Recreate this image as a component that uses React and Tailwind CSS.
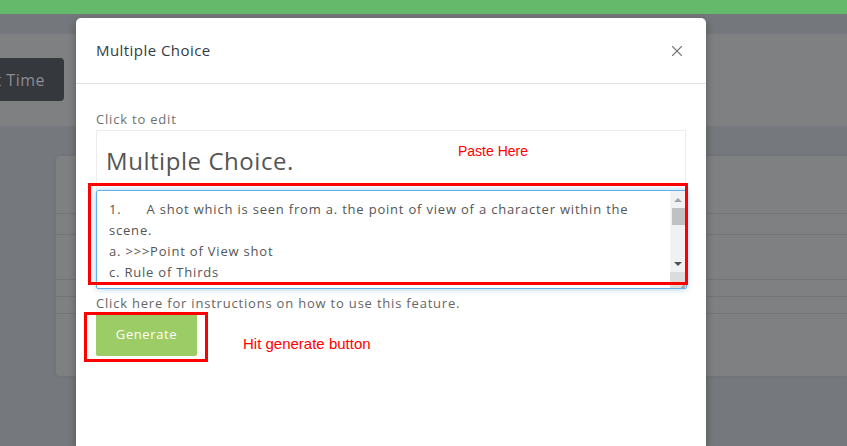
import React from 'react';
import { X } from 'lucide-react';

const questionText = `1.      A shot which is seen from a. the point of view of a character within the scene.
a. >>>Point of View shot
c. Rule of Thirds`;

const BackgroundPage = () => (
  <div className="h-full w-full bg-[#75787c]">
    <div className="h-[14px] bg-[#65b96a]" />
    <div className="h-[20px] bg-[#74777b]" />
    <div className="h-[92px] bg-[#7f8081] pt-[24px]">
      <div className="w-[64px] h-[43px] bg-[#35383d] rounded-r-[4px] flex items-center justify-end pr-[19px] text-[16px] text-[#8b8d90] tracking-[0.5px] whitespace-nowrap">
        t Time
      </div>
    </div>
    <div className="pl-[56px] pt-[30px]">
      <div className="h-[220px] bg-[#7f8081] rounded-l-[4px] shadow-[0_0_4px_rgba(0,0,0,0.08)] pt-[57px]">
        <div className="border-b border-[#737475] h-[0px]" />
        <div className="h-[20px]" />
        <div className="border-b border-[#737475]" />
        <div className="h-[44px]" />
        <div className="border-b border-[#737475]" />
        <div className="h-[16px]" />
        <div className="border-b border-[#737475]" />
        <div className="h-[16px]" />
        <div className="border-b border-[#737475]" />
      </div>
    </div>
  </div>
);

const Scrollbar = () => (
  <div className="w-[16px] h-full bg-[#f1f1f1] flex flex-col items-center">
    <div className="h-[17px] flex items-center justify-center">
      <div className="w-0 h-0 border-l-[4px] border-r-[4px] border-b-[4px] border-l-transparent border-r-transparent border-b-[#a3a3a3]" />
    </div>
    <div className="w-[13px] h-[17px] bg-[#c1c1c1]" />
    <div className="flex-1" />
    <div className="h-[17px] flex items-center justify-center">
      <div className="w-0 h-0 border-l-[4px] border-r-[4px] border-t-[4px] border-l-transparent border-r-transparent border-t-[#505050]" />
    </div>
    <div className="w-[16px] h-[16px] bg-[#dcdcdc] relative overflow-hidden">
      <div className="absolute right-[1px] bottom-[3px] w-[8px] border-t border-[#8a8a8a] -rotate-45 origin-right" />
      <div className="absolute right-[1px] bottom-[1px] w-[4px] border-t border-[#8a8a8a] -rotate-45 origin-right" />
    </div>
  </div>
);

const App = () => {
  return (
    <div className="relative w-[847px] h-[446px] overflow-hidden font-['Open_Sans',sans-serif]">
      <BackgroundPage />

      <div className="absolute left-[76px] top-[18px] bottom-0 w-[630px] bg-white rounded-t-[5px] shadow-[0_3px_9px_rgba(0,0,0,0.3)]">
        <div className="h-[66px] border-b border-[#e1e1e1] flex items-center justify-between px-[20px]">
          <h4 className="text-[15px] text-[#333c45] tracking-[0.45px]">Multiple Choice</h4>
          <X className="w-[18px] h-[18px] text-[#777]" strokeWidth={1.5} />
        </div>

        <div className="px-[20px] pt-[26px]">
          <div className="text-[13px] leading-[18px] text-[#707070] tracking-[0.8px]">Click to edit</div>
          <div className="mt-[2px] h-[60px] border border-[#ededed] border-b-0 px-[9px] flex items-center">
            <span className="text-[24px] text-[#555] tracking-[0.55px]">Multiple Choice.</span>
          </div>
          <div className="flex w-[591px] h-[99px] border border-[#66afe9] rounded-[2px] shadow-[0_0_6px_rgba(102,175,233,0.6)]">
            <div className="flex-1 overflow-hidden pl-[12px] pr-[6px] pt-[8px] text-[13px] leading-[21px] text-[#555] tracking-[0.8px] whitespace-pre-wrap">
              {questionText}
            </div>
            <Scrollbar />
          </div>
          <div className="mt-[5px] text-[13px] leading-[18px] text-[#666] tracking-[0.8px]">
            Click here for instructions on how to use this feature.
          </div>
          <button className="mt-[2px] w-[101px] h-[42px] bg-[#9ccc65] rounded-[2px] text-white text-[13px] tracking-[0.6px]">
            Generate
          </button>
        </div>

        <div className="absolute left-[12px] top-[165px] w-[600px] h-[102px] border-[3px] border-[#ff0000] pointer-events-none" />
        <div className="absolute left-[8px] top-[294px] w-[124px] h-[50px] border-[3px] border-[#ff0000] pointer-events-none" />
        <div className="absolute left-[382px] top-[124px] text-[14px] leading-[18px] text-[#ff0000] font-['Liberation_Sans',sans-serif]">Paste Here</div>
        <div className="absolute left-[167px] top-[317px] text-[15px] leading-[18px] text-[#ff0000] font-['Liberation_Sans',sans-serif]">Hit generate button</div>
      </div>
    </div>
  );
};

export default App;
